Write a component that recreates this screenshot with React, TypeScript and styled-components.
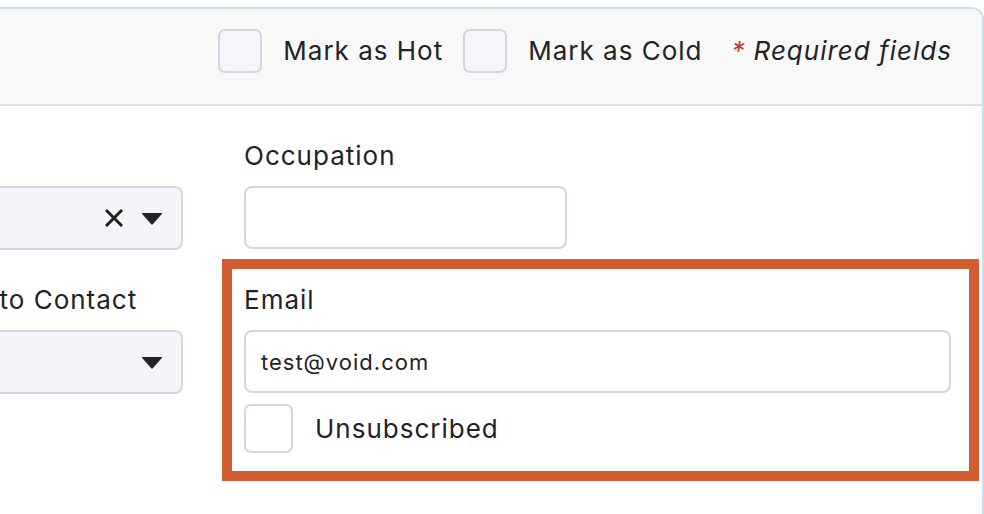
import React from "react";
import styled, { createGlobalStyle } from "styled-components";

const GlobalStyle = createGlobalStyle`
  html, body { margin: 0; padding: 0; background: #ffffff; overflow: hidden; }
  body { font-family: Inter, "Noto Sans", sans-serif; color: #222326; letter-spacing: 1px; }
  * { box-sizing: border-box; }
`;

const Page = styled.div`
  width: 984px;
  height: 514px;
  padding-top: 7px;
  overflow: hidden;
`;

const Card = styled.div`
  margin-left: -260px;
  width: 1244px;
  height: 540px;
  border: 2px solid #c9dfee;
  border-radius: 12px;
  background: #ffffff;
  overflow: hidden;
`;

const Header = styled.div`
  height: 97px;
  padding: 20px 30px 0 0;
  background: #f8f8f8;
  border-bottom: 2px solid #dedede;
  display: flex;
  justify-content: flex-end;
  align-items: flex-start;
`;

const CheckLabel = styled.label<{ $space: number }>`
  display: flex;
  align-items: center;
  gap: 21px;
  font-size: 26px;
  line-height: 44px;
  margin-right: ${(p) => p.$space}px;
`;

const CheckBox = styled.span<{ $size: number; $bg?: string }>`
  display: inline-block;
  width: ${(p) => p.$size}px;
  height: ${(p) => p.$size}px;
  border: 2px solid #d3d5e3;
  border-radius: 7px;
  background: ${(p) => p.$bg || "#f5f6fa"};
  flex: none;
`;

const Required = styled.span`
  font-size: 26px;
  line-height: 44px;
  font-style: italic;
  margin-left: 12px;
`;

const Star = styled.span`
  color: #c0392b;
  margin-right: 8px;
`;

const Body = styled.div`
  padding: 31px 25px 0 60px;
  display: grid;
  grid-template-columns: 381px 713px;
  column-gap: 61px;
  row-gap: 31px;
  align-items: start;
`;

const Field = styled.div<{ $highlight?: boolean }>`
  display: flex;
  flex-direction: column;
  ${(p) =>
    p.$highlight
      ? `
    padding: 0 6px 6px 0;
    outline: 10px solid #d35c30;
    outline-offset: 12px;
  `
      : ""}
`;

const Label = styled.div`
  font-size: 26px;
  line-height: 38px;
  margin-bottom: 11px;
  white-space: nowrap;
`;

const TextInput = styled.div<{ $width?: number }>`
  width: ${(p) => (p.$width ? `${p.$width}px` : "100%")};
  height: 63px;
  border: 2px solid #d3d5e2;
  border-radius: 8px;
  background: #ffffff;
  padding: 0 15px;
  display: flex;
  align-items: center;
  font-size: 22px;
`;

const Select = styled.div`
  height: 64px;
  border: 2px solid #d3d5e2;
  border-radius: 8px;
  background: #f4f5f9;
  display: flex;
  align-items: center;
  justify-content: flex-end;
  padding-right: 18px;
  gap: 18px;
`;

const IconWrap = styled.span`
  display: inline-flex;
  align-items: center;
`;

const CheckRow = styled.label`
  display: flex;
  align-items: center;
  gap: 22px;
  margin-top: 11px;
  font-size: 26px;
`;

const ClearIcon = () => (
  <IconWrap>
    <svg width="18" height="18" viewBox="0 0 18 18">
      <path d="M2 2 L16 16 M16 2 L2 16" stroke="#222" strokeWidth="3" strokeLinecap="square" />
    </svg>
  </IconWrap>
);

const CaretIcon = () => (
  <IconWrap>
    <svg width="22" height="13" viewBox="0 0 22 13">
      <path d="M1.5 1 L20.5 1 Q21.5 1 20.8 2 L12 12 Q11 13 10 12 L1.2 2 Q0.5 1 1.5 1 Z" fill="#222" />
    </svg>
  </IconWrap>
);

export default function App() {
  return (
    <>
      <GlobalStyle />
      <Page>
        <Card>
          <Header>
            <CheckLabel $space={20}>
              <CheckBox $size={44} />
              Mark as Hot
            </CheckLabel>
            <CheckLabel $space={17}>
              <CheckBox $size={44} />
              Mark as Cold
            </CheckLabel>
            <Required>
              <Star>*</Star>Required fields
            </Required>
          </Header>
          <Body>
            <Field>
              <Label>Status</Label>
              <Select>
                <ClearIcon />
                <CaretIcon />
              </Select>
            </Field>
            <Field>
              <Label>Occupation</Label>
              <TextInput $width={323} />
            </Field>
            <Field>
              <Label>Preferred Way to Contact</Label>
              <Select>
                <CaretIcon />
              </Select>
            </Field>
            <Field $highlight>
              <Label>Email</Label>
              <TextInput>test@void.com</TextInput>
              <CheckRow>
                <CheckBox $size={49} $bg="#ffffff" />
                Unsubscribed
              </CheckRow>
            </Field>
          </Body>
        </Card>
      </Page>
    </>
  );
}
